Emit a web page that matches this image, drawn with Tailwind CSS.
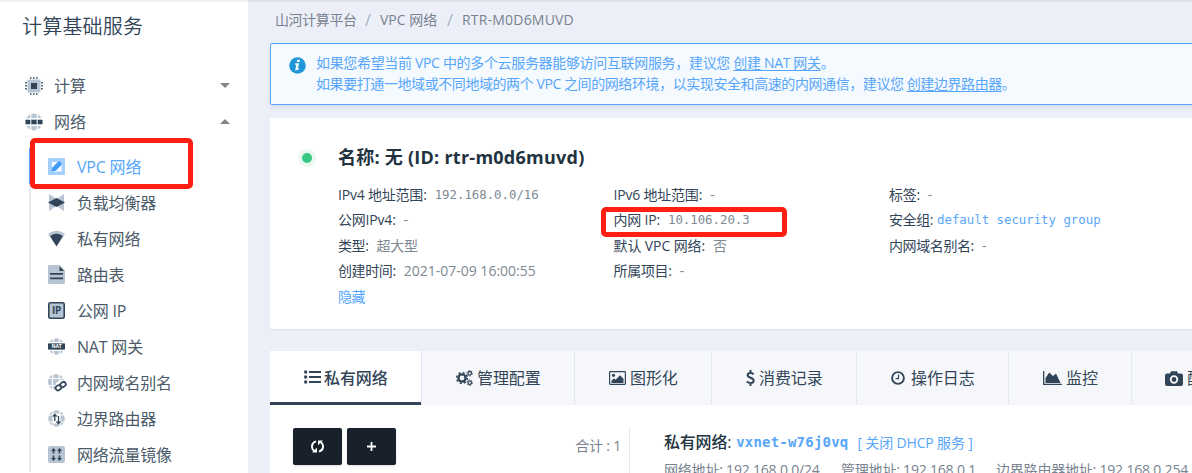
<!DOCTYPE html>
<html lang="zh-CN">
<head>
<meta charset="utf-8">
<title>计算基础服务</title>
<script src="https://cdn.jsdelivr.net/npm/@tailwindcss/browser@4"></script>
</head>
<body class="h-[473px] overflow-hidden bg-[#eceff8] font-['Open_Sans','Noto_Sans_CJK_SC',sans-serif] text-[#324558]">
<div class="relative flex h-[473px] w-[1192px] overflow-hidden whitespace-nowrap">
  <aside class="h-full w-[248px] shrink-0 bg-white">
    <h1 class="pt-[12px] pl-[22px] text-[20px] leading-[30px] font-[350] tracking-[0.2px]">计算基础服务</h1>
    <nav class="mt-[26px] text-[16px] text-[#4b5a69]">
      <div class="flex h-9 items-center pr-[18px] pl-[25px]">
        <svg class="size-[18px]" viewBox="0 0 18 18"><path fill="none" stroke="#324558" stroke-width="1.6" stroke-dasharray="1.5 1.5" d="M5 1h8M5 17h8M1 5v8M17 5v8"/><rect x="2.5" y="2.5" width="13" height="13" rx="1" fill="#b7c4d1"/><rect x="6" y="6" width="6" height="6" fill="#324558"/></svg>
        <span class="ml-[11px]">计算</span>
        <svg class="mb-[2px] ml-auto h-[5px] w-[10px]" viewBox="0 0 10 5"><path fill="#858585" d="M0 0h10L5 5z"/></svg>
      </div>
      <div class="flex h-9 items-center pr-[18px] pl-[25px]">
        <svg class="size-[18px]" viewBox="0 0 18 18"><circle cx="9" cy="9" r="8.5" fill="#b7c4d1"/><path fill="none" stroke="#fff" stroke-width="1.2" d="M6.4 0Q3.8 9 6.4 18M11.6 0Q14.2 9 11.6 18M0 5.500h18M0 12.500h18"/><path fill="#324558" d="M.5 7h4.800v4H.5zM6.500 7h5v4h-5zM12.700 7h4.800v4h-4.800z"/></svg>
        <span class="ml-[11px]">网络</span>
        <svg class="mb-[2px] ml-auto h-[5px] w-[10px]" viewBox="0 0 10 5"><path fill="#858585" d="M0 5h10L5 0z"/></svg>
      </div>
      <ul class="ml-[29px] mt-[8px] border-l-2 border-[#e5e9ef] tracking-[-0.2px]">
        <li class="-ml-[2px] flex h-9 items-center gap-[12px] border-l-2 border-[#57a6fb] pl-[17px] text-[#57a6fb]">
          <svg class="size-[17px]" viewBox="0 0 17 17"><rect width="17" height="17" rx="1" fill="#a3d0fd"/><rect x="4" y="4" width="9.500" height="9.500" fill="#fff"/><path fill="#459bf9" d="M3.500 13.500l.8-4L10 3.700h3.500v3.200l-5.700 5.800z"/></svg><span class="pt-[2px]">VPC 网络</span></li>
        <li class="flex h-9 items-center gap-[12px] pl-[17px]">
          <svg class="size-[17px]" viewBox="0 0 17 17"><path fill="#b7c4d1" d="M1 0l7.500 5L16 0v17l-7.500-5L1 17z"/><path fill="#324558" d="M0 8.500L8.500 4 17 8.500 8.500 13z"/></svg><span class="pt-[2px]">负载均衡器</span></li>
        <li class="flex h-9 items-center gap-[12px] pl-[17px]">
          <svg class="size-[17px]" viewBox="0 0 17 17"><path fill="#b7c4d1" d="M0 4Q8.500-2.500 17 4l-2 3H2z"/><path fill="#324558" d="M2 6.200Q8.500 1.500 15 6.200L8.500 16.500z"/></svg><span class="pt-[2px]">私有网络</span></li>
        <li class="flex h-9 items-center gap-[12px] pl-[17px]">
          <svg class="h-[19px] w-[17px]" viewBox="0 0 17 19"><path fill="#b7c4d1" d="M1 0h10.500L17 5.500V18l-1 1H1l-1-1V1z"/><path fill="#324558" d="M11.500 1l4.500 5h-4.500zM2 8h13v1.700H2zM2 12.500h13v1.700H2z"/></svg><span class="pt-[2px]">路由表</span></li>
        <li class="flex h-9 items-center gap-[12px] pl-[17px]">
          <svg class="size-[17px]" viewBox="0 0 17 17"><rect x=".8" y=".8" width="15.400" height="15.400" rx="1.500" fill="#b7c4d1" stroke="#324558" stroke-width="1.600"/><text x="8.500" y="12.200" text-anchor="middle" font-family="Open Sans" font-size="10" font-weight="700" fill="#324558">IP</text></svg><span class="pt-[2px]">公网 IP</span></li>
        <li class="flex h-9 items-center gap-[12px] pl-[17px]">
          <svg class="size-[17px]" viewBox="0 0 17 17"><circle cx="8.500" cy="8.500" r="8.300" fill="#b7c4d1"/><path fill="none" stroke="#fff" stroke-width="1.200" d="M6 0Q3.500 8.500 6 17M11 0Q13.500 8.500 11 17M0 4.500h17M0 12.500h17"/><path fill="#324558" d="M0 5.500h17v6H0z"/><text x="8.500" y="10.300" text-anchor="middle" font-family="Open Sans" font-size="5" font-weight="700" fill="#fff">NAT</text></svg><span class="pt-[2px]">NAT 网关</span></li>
        <li class="flex h-9 items-center gap-[12px] pl-[17px]">
          <svg class="size-[17px] overflow-visible" viewBox="0 0 17 17"><circle cx="8" cy="8" r="8" fill="#b7c4d1"/><path fill="none" stroke="#fff" stroke-width="1.200" d="M5.500 0Q3 8.500 5.500 17M10.500 0Q13 8.500 10.500 17M0 4.500h17M0 11.500h17"/><path fill="#fff" d="M8 9l4-3h6v11H7z"/><g fill="none" stroke="#324558" stroke-width="1.700" transform="rotate(-35 12.500 12)"><rect x="7" y="10" width="5.500" height="4.500" rx="2"/><rect x="12.700" y="10" width="5.500" height="4.500" rx="2"/></g></svg><span class="pt-[2px]">内网域名别名</span></li>
        <li class="flex h-9 items-center gap-[12px] pl-[17px]">
          <svg class="size-[17px]" viewBox="0 0 17 17"><circle cx="8.500" cy="8.500" r="8.300" fill="#b7c4d1"/><path fill="none" stroke="#fff" stroke-width="1.200" d="M5 0v17M12 0v17M0 5h17M0 12h17"/><path fill="#fff" d="M5 3.500h7v10H5z"/><path fill="none" stroke="#324558" stroke-width="1.300" d="M6.800 11V4.500M4.800 6.500l2-2 2 2M10.500 6v7.500M8.500 11.500l2 2 2-2"/></svg><span class="pt-[2px]">边界路由器</span></li>
        <li class="flex h-9 items-center gap-[12px] pl-[17px]">
          <svg class="size-[17px]" viewBox="0 0 17 17"><rect width="17" height="17" rx="2" fill="#b7c4d1"/><path fill="#324558" d="M5.500 2l2.500 3H6.300v2.500H4.700V5H3zM11.500 2L14 5h-1.700v2.500h-1.600V5H9zM5.500 15L3 12h1.700V9.500h1.600V12H8zM11.500 15L9 12h1.700V9.500h1.600V12H14z"/></svg><span class="pt-[2px]">网络流量镜像</span></li>
      </ul>
    </nav>
  </aside>

  <main class="w-[944px] shrink-0 overflow-hidden pl-[22px]">
    <div class="flex h-[43px] items-center pb-[4px] pl-[5px] text-[14px] text-[#78838f]">
      <span class="w-[90px] tracking-[-0.4px]">山河计算平台</span><span class="w-[15px] text-[16px] text-[#9fb3c8]">/</span><span class="w-[67px]">VPC 网络</span><span class="w-[15px] text-[16px] text-[#9fb3c8]">/</span><span class="tracking-[0.2px]">RTR-M0D6MUVD</span>
    </div>
    <div class="flex h-[62px] w-[940px] rounded-[2px] border border-[#57a6fb] bg-[#f5faff] pt-[8px] pl-[18px] text-[14px] leading-[21px] text-[#57a6fb] shadow-[0_2px_4px_rgba(50,70,110,0.12)]">
      <svg class="mt-[5px] size-[17px]" viewBox="0 0 17 17"><circle cx="8.500" cy="8.500" r="8.300" fill="#2196d8"/><path fill="#fff" d="M8.300 2.700h2.700l-.5 2.200H7.800zM6.300 6.300H10l-1.100 5h1.200l-.3 1.300-3.700 1 1.300-5.900H5.900z"/></svg>
      <div class="ml-[10px]">
        <p class="tracking-[-0.33px]">如果您希望当前 VPC 中的多个云服务器能够访问互联网服务，建议您 <a class="underline underline-offset-2">创建 NAT 网关</a>。</p>
        <p class="tracking-[-0.42px]">如果要打通一地域或不同地域的两个 VPC 之间的网络环境，以实现安全和高速的内网通信，建议您 <a class="underline underline-offset-2">创建边界路由器</a>。</p>
      </div>
    </div>

    <section class="mt-[13px] flex h-[211px] bg-white pt-[26px] pl-[28px] shadow-[0_1px_1px_rgba(0,0,0,0.05)]">
      <div class="mt-[5px] flex size-[18px] items-center justify-center rounded-full bg-[#eaf8f1]"><span class="size-[10px] rounded-full bg-[#36c883]"></span></div>
      <div class="ml-[22px]">
        <h2 class="text-[18px] leading-[27px] font-bold tracking-[0.25px] text-[#22323f]">名称: 无 (ID: rtr-m0d6muvd)</h2>
        <div class="mt-[10.600px] grid grid-cols-[275.500px_275.500px_300px] text-[14px] leading-[25.500px]">
          <div>
            <p class="flex gap-[8px]"><span class="tracking-[-0.2px]">IPv4 地址范围:</span><span class="pt-px font-['DejaVu_Sans_Mono',monospace] text-[12.350px] leading-[24.500px] text-[#7e8993]">192.168.0.0/16</span></p>
            <p class="flex gap-[8px]"><span class="tracking-[-0.2px]">公网IPv4:</span><span class="text-[#7e8993]">-</span></p>
            <p class="flex gap-[8px]"><span class="tracking-[-0.4px]">类型:</span><span class="tracking-[-0.2px] text-[#7e8993]">超大型</span></p>
            <p class="flex gap-[8px]"><span class="tracking-[-0.4px]">创建时间:</span><span class="text-[#7e8993]">2021-07-09 16:00:55</span></p>
            <p class="tracking-[-0.4px] text-[#57a6fb]">隐藏</p>
          </div>
          <div>
            <p class="flex gap-[8px]"><span class="tracking-[-0.2px]">IPv6 地址范围:</span><span class="text-[#7e8993]">-</span></p>
            <p class="flex gap-[8px]"><span class="tracking-[-0.2px]">内网 IP:</span><span class="pt-px font-['DejaVu_Sans_Mono',monospace] text-[12.350px] leading-[24.500px] text-[#7e8993]">10.106.20.3</span></p>
            <p class="flex gap-[8px]"><span class="tracking-[-0.1px]">默认 VPC 网络:</span><span class="text-[#7e8993]">否</span></p>
            <p class="flex gap-[8px]"><span class="tracking-[-0.3px]">所属项目:</span><span class="text-[#7e8993]">-</span></p>
          </div>
          <div>
            <p class="flex gap-[8px]"><span class="tracking-[-0.3px]">标签:</span><span class="text-[#7e8993]">-</span></p>
            <p class="flex gap-[4px]"><span class="tracking-[-0.4px]">安全组:</span><span class="pt-px font-['DejaVu_Sans_Mono',monospace] text-[12.350px] leading-[24.500px] text-[#57a6fb]">default security group</span></p>
            <p class="flex gap-[8px]"><span class="tracking-[-0.4px]">内网域名别名:</span><span class="text-[#7e8993]">-</span></p>
          </div>
        </div>
      </div>
    </section>

    <section class="mt-[22px] w-[1100px]">
      <div class="flex h-[54px] bg-[#f5f7fb] text-[16px] tracking-[-0.1px]">
        <div class="flex w-[151px] items-center gap-[3px] border-b-3 border-[#324558] bg-white pl-[34px]">
          <svg class="h-[14px] w-[17px]" viewBox="0 0 17 14"><g fill="#324558"><circle cx="1.700" cy="2" r="1.700"/><circle cx="1.700" cy="7" r="1.700"/><circle cx="1.700" cy="12" r="1.700"/><path d="M5 1h12v2H5zM5 6h12v2H5zM5 11h12v2H5z"/></g></svg><span class="pt-[2px] font-medium">私有网络</span></div>
        <div class="flex w-[153px] items-center gap-[4px] border-l border-[#e2e8ef] pl-[34px]">
          <svg class="h-[16px] w-[17px]" viewBox="0 0 17 16"><g fill="none" stroke="#324558"><circle cx="6" cy="8" r="3.600" stroke-width="2.400"/><circle cx="6" cy="8" r="5.400" stroke-width="1.500" stroke-dasharray="2.100 2.140"/><circle cx="13.700" cy="3.300" r="1.800" stroke-width="1.300"/><circle cx="13.700" cy="3.300" r="2.800" stroke-width=".9" stroke-dasharray="1.300 1.600"/><circle cx="13.700" cy="12.700" r="1.800" stroke-width="1.300"/><circle cx="13.700" cy="12.700" r="2.800" stroke-width=".9" stroke-dasharray="1.300 1.600"/></g></svg><span>管理配置</span></div>
        <div class="flex w-[137px] items-center gap-[4px] border-l border-[#e2e8ef] pl-[34px]">
          <svg class="h-[14px] w-[17px]" viewBox="0 0 17 14"><rect x=".6" y=".6" width="15.800" height="12.800" rx=".8" fill="none" stroke="#324558" stroke-width="1.200"/><circle cx="4.500" cy="4.300" r="1.600" fill="#324558"/><path fill="#324558" d="M2.500 12V9.800L5 7.300l1.500 1.500 4.500-4.500 3.500 3.500V12z"/></svg><span>图形化</span></div>
        <div class="flex w-[145px] items-center gap-[4px] border-l border-[#e2e8ef] pl-[34px]">
          <svg class="h-[16px] w-[9px]" viewBox="0 0 9 16"><path fill="none" stroke="#324558" stroke-width="2" d="M7.700 4.300Q6.500 3 4.500 3 1.700 3 1.700 5.200C1.700 8 7.700 7.500 7.700 10.500Q7.700 13 4.500 13 2.500 13 .8 11.500M4.500 0v3M4.500 13v3"/></svg><span>消费记录</span></div>
        <div class="flex w-[152px] items-center gap-[6px] border-l border-[#e2e8ef] pl-[34px]">
          <svg class="size-[14px]" viewBox="0 0 14 14"><circle cx="7" cy="7" r="5.900" fill="none" stroke="#324558" stroke-width="1.900"/><path fill="none" stroke="#324558" stroke-width="1.200" d="M7.500 3.500v4.200H4.700"/></svg><span>操作日志</span></div>
        <div class="flex w-[123px] items-center gap-[4px] border-l border-[#e2e8ef] pl-[34px]">
          <svg class="h-[14px] w-[19px]" viewBox="0 0 19 14"><path fill="none" stroke="#324558" stroke-width="1.300" d="M.7 0v13.300H19"/><path fill="#324558" d="M2.500 12V7l3.700-5.500L10 5l3-2.500L17.500 12z"/></svg><span>监控</span></div>
        <div class="flex w-[200px] items-center gap-[4px] border-l border-[#e2e8ef] pl-[33px]">
          <svg class="h-[15px] w-[18px]" viewBox="0 0 18 15"><path fill="#324558" d="M2 2.500h3L6 .3h6l1 2.200h3q2 0 2 2V13q0 2-2 2H2q-2 0-2-2V4.500q0-2 2-2z"/><circle cx="9" cy="8.500" r="3.300" fill="none" stroke="#fff" stroke-width="1.700"/></svg><span>配</span></div>
      </div>
      <div class="flex h-[68px] bg-white pl-[23px]">
        <div class="mt-[23px] flex h-[100px] w-[337px] border-r border-[#e2e8ef]">
          <button class="flex h-[37px] w-[49px] items-center justify-center rounded-[2px] bg-[#17202b] shadow-sm"><svg class="size-[13px]" viewBox="0 0 13 13"><path fill="none" stroke="#fff" stroke-width="1.900" d="M5 1.400C0 2.800-.2 9 3.500 11M8 11.600C13 10.200 13.200 4 9.500 2"/><path fill="#fff" d="M1 12.500h5V7.800zM12 .5H7v4.700z"/></svg></button>
          <button class="ml-[5px] flex h-[37px] w-[49px] items-center justify-center rounded-[2px] bg-[#17202b] shadow-sm"><svg class="size-[9px]" viewBox="0 0 9 9"><path fill="#fff" d="M3.600 0h1.800v3.600H9v1.800H5.400V9H3.600V5.400H0V3.600h3.600z"/></svg></button>
          <span class="mt-[7px] mr-[8px] ml-auto text-[14px] leading-[21px] tracking-[-0.2px] text-[#78838f]">合计 : 1</span>
        </div>
        <div class="mt-[25px] ml-[34px]">
          <div class="flex h-[24px] items-center"><span class="text-[16px] font-medium tracking-[-0.2px] text-[#22323f]">私有网络:</span><span class="ml-[5px] font-['DejaVu_Sans_Mono',monospace] text-[14px] font-bold tracking-[0.2px] text-[#57a6fb]">vxnet-w76j0vq</span><span class="ml-[9px] text-[14px] tracking-[-0.15px] text-[#57a6fb]">[ 关闭 DHCP 服务 ]</span></div>
          <div class="mt-[5px] flex text-[14px] leading-[21px] tracking-[-0.2px] text-[#78838f]"><span class="w-[177px]">网络地址: 192.168.0.0/24</span><span class="w-[155px]">管理地址: 192.168.0.1</span><span>边界路由器地址: 192.168.0.254</span><span class="mt-[7px] ml-[4px] size-[12px] rounded-full bg-[#6b4a1c]"></span></div>
        </div>
      </div>
    </section>
  </main>

  <div class="absolute top-[138px] left-[30px] h-[51px] w-[163px] rounded-[5px] border-5 border-[#fd2012]"></div>
  <div class="absolute top-[207px] left-[601px] h-[30px] w-[186px] rounded-[5px] border-5 border-[#fd2012]"></div>
  <div class="absolute top-0 left-0 h-[3px] w-full bg-linear-to-b from-black/8 to-transparent"></div>
</div>
</body>
</html>
